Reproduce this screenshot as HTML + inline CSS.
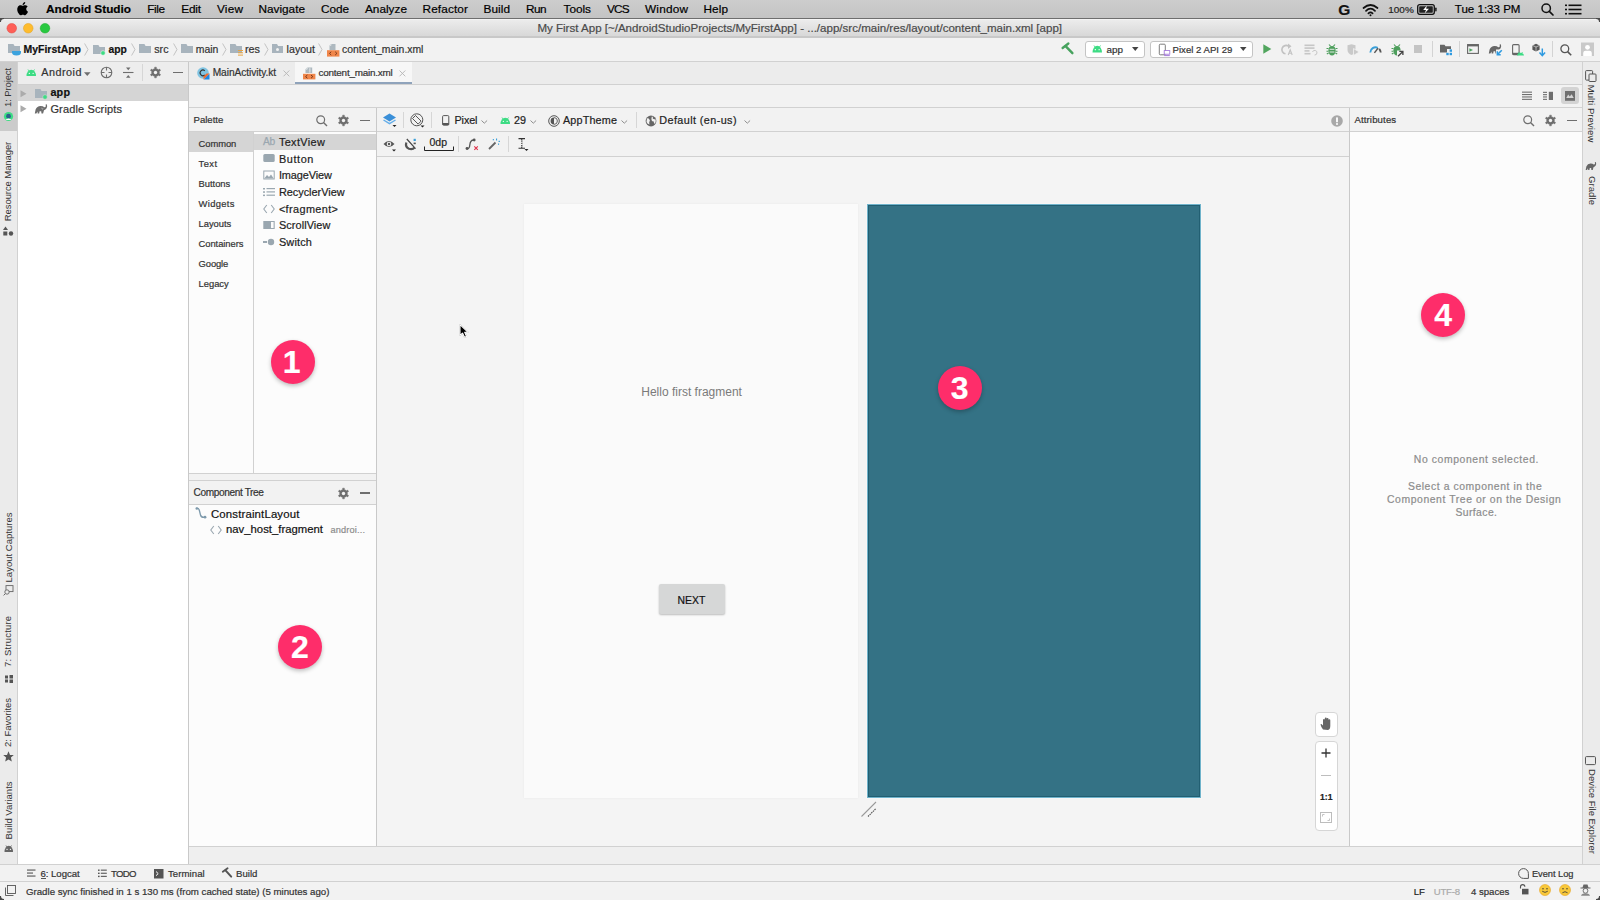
<!DOCTYPE html>
<html><head><meta charset="utf-8"><title>Android Studio</title>
<style>
html,body{margin:0;padding:0;}
body{width:1600px;height:900px;overflow:hidden;position:relative;background:#F2F2F2;font-family:"Liberation Sans",sans-serif;}
.a{position:absolute;}
.t{position:absolute;white-space:nowrap;line-height:1;-webkit-text-stroke:0.2px currentColor;}
svg{overflow:visible;}
</style></head><body>
<div class="a" style="left:0px;top:0px;width:1600px;height:18px;background:linear-gradient(#CDCDCD,#C4C4C4);"></div>
<div class="a" style="left:0px;top:18px;width:1600px;height:1px;background:#6E6E6E;"></div>
<div class="a" style="left:0px;top:19px;width:1600px;height:17px;background:linear-gradient(#EDEDED,#D8D8D8);"></div>
<div class="a" style="left:0px;top:19px;width:1600px;height:1px;background:#F4F4F4;"></div>
<div class="a" style="left:0px;top:36px;width:1600px;height:2px;background:#C8C8C8;"></div>
<div class="a" style="left:0px;top:38px;width:1600px;height:23px;background:#F2F2F2;"></div>
<div class="a" style="left:0px;top:61px;width:1600px;height:1px;background:#D1D1D1;"></div>
<div class="a" style="left:0px;top:62px;width:17px;height:802px;background:#EBEBEB;"></div>
<div class="a" style="left:17px;top:62px;width:1px;height:802px;background:#D1D1D1;"></div>
<div class="a" style="left:0px;top:62px;width:17px;height:69px;background:#CBCBCB;"></div>
<div class="a" style="left:18px;top:62px;width:170px;height:22px;background:#EDEDED;"></div>
<div class="a" style="left:18px;top:84px;width:170px;height:1px;background:#D1D1D1;"></div>
<div class="a" style="left:18px;top:85px;width:170px;height:779px;background:#FFFFFF;"></div>
<div class="a" style="left:18px;top:85px;width:170px;height:16px;background:#D5D5D5;"></div>
<div class="a" style="left:188px;top:62px;width:1px;height:802px;background:#C9C9C9;"></div>
<div class="a" style="left:189px;top:62px;width:1393px;height:22px;background:#ECECEC;"></div>
<div class="a" style="left:295px;top:62px;width:117px;height:22px;background:#F7F7F7;"></div>
<div class="a" style="left:295px;top:82px;width:117px;height:2px;background:#8FA3BB;"></div>
<div class="a" style="left:189px;top:84px;width:1393px;height:1px;background:#D1D1D1;"></div>
<div class="a" style="left:189px;top:85px;width:1393px;height:22px;background:#F2F2F2;"></div>
<div class="a" style="left:189px;top:107px;width:1393px;height:1px;background:#D1D1D1;"></div>
<div class="a" style="left:189px;top:108px;width:187px;height:23px;background:#F2F2F2;"></div>
<div class="a" style="left:189px;top:131px;width:187px;height:1px;background:#D1D1D1;"></div>
<div class="a" style="left:189px;top:132px;width:187px;height:341px;background:#FCFCFC;"></div>
<div class="a" style="left:189px;top:132px;width:64px;height:20px;background:#D5D5D5;"></div>
<div class="a" style="left:254px;top:134px;width:122px;height:16px;background:#D5D5D5;"></div>
<div class="a" style="left:253px;top:132px;width:1px;height:341px;background:#D1D1D1;"></div>
<div class="a" style="left:189px;top:473px;width:187px;height:1px;background:#D1D1D1;"></div>
<div class="a" style="left:189px;top:474px;width:187px;height:6px;background:#F2F2F2;"></div>
<div class="a" style="left:189px;top:480px;width:187px;height:1px;background:#D1D1D1;"></div>
<div class="a" style="left:189px;top:481px;width:187px;height:23px;background:#F2F2F2;"></div>
<div class="a" style="left:189px;top:504px;width:187px;height:1px;background:#D1D1D1;"></div>
<div class="a" style="left:189px;top:505px;width:187px;height:341px;background:#FCFCFC;"></div>
<div class="a" style="left:376px;top:108px;width:1px;height:738px;background:#C9C9C9;"></div>
<div class="a" style="left:377px;top:108px;width:972px;height:23px;background:#F2F2F2;"></div>
<div class="a" style="left:377px;top:131px;width:972px;height:1px;background:#D1D1D1;"></div>
<div class="a" style="left:377px;top:132px;width:972px;height:24px;background:#F2F2F2;"></div>
<div class="a" style="left:377px;top:156px;width:972px;height:1px;background:#D1D1D1;"></div>
<div class="a" style="left:377px;top:157px;width:972px;height:689px;background:#F4F4F4;"></div>
<div class="a" style="left:1349px;top:108px;width:1px;height:738px;background:#C9C9C9;"></div>
<div class="a" style="left:1350px;top:108px;width:232px;height:23px;background:#F2F2F2;"></div>
<div class="a" style="left:1350px;top:131px;width:232px;height:1px;background:#D1D1D1;"></div>
<div class="a" style="left:1350px;top:132px;width:232px;height:714px;background:#FCFCFC;"></div>
<div class="a" style="left:189px;top:846px;width:1393px;height:1px;background:#D1D1D1;"></div>
<div class="a" style="left:189px;top:847px;width:1393px;height:17px;background:#EFEFEF;"></div>
<div class="a" style="left:1582px;top:62px;width:1px;height:802px;background:#D1D1D1;"></div>
<div class="a" style="left:1583px;top:62px;width:17px;height:802px;background:#EBEBEB;"></div>
<div class="a" style="left:0px;top:864px;width:1600px;height:1px;background:#D1D1D1;"></div>
<div class="a" style="left:0px;top:865px;width:1600px;height:17px;background:#F2F2F2;"></div>
<div class="a" style="left:0px;top:881px;width:1600px;height:1px;background:#D1D1D1;"></div>
<div class="a" style="left:0px;top:882px;width:1600px;height:18px;background:#F2F2F2;"></div>
<div class="a" style="left:524px;top:204px;width:334px;height:594px;background:#FAFAFA;box-shadow:0 0 2px rgba(0,0,0,0.06);"></div>
<div class="a" style="left:866px;top:203px;width:336px;height:596px;background:#F8F6F5;"></div>
<div class="a" style="left:867px;top:204px;width:334px;height:594px;background:#347285;border:1px solid #6FB3CB;box-sizing:border-box;box-shadow:inset 0 0 0 1px #225F72;"></div>
<svg class="a" style="left:858px;top:798px;" width="22" height="22" viewBox="0 0 22 22"><path d="M3.5 18.5 L18 4" stroke="#9A9A9A" stroke-width="1.1"/><path d="M10 18.5 L18 10.5" stroke="#555" stroke-width="1.1" stroke-dasharray="1.5 0.8"/></svg>
<div class="t" style="left:641.25px;top:386px;font-size:12.0px;color:#7A7A7A;-webkit-text-stroke:0;">Hello first fragment</div>
<div class="a" style="left:659px;top:584px;width:66px;height:30px;background:#D6D7D7;border-radius:2px;box-shadow:0 1px 2px rgba(0,0,0,0.25);"></div>
<div class="t" style="left:677.60px;top:596px;font-size:10.4px;color:#111;">NEXT</div>
<div class="a" style="left:271px;top:340px;width:44px;height:44px;border-radius:50%;background:#FE2D6A;box-shadow:0 2px 4px rgba(0,0,0,0.25);"></div>
<div class="t" style="left:282.70px;top:346px;font-size:32.0px;color:#fff;font-weight:bold;">1</div>
<div class="a" style="left:277.5px;top:625px;width:44px;height:44px;border-radius:50%;background:#FE2D6A;box-shadow:0 2px 4px rgba(0,0,0,0.25);"></div>
<div class="t" style="left:290.90px;top:631px;font-size:32.0px;color:#fff;font-weight:bold;">2</div>
<div class="a" style="left:938px;top:365.6px;width:44px;height:44px;border-radius:50%;background:#FE2D6A;box-shadow:0 2px 4px rgba(0,0,0,0.25);"></div>
<div class="t" style="left:950.80px;top:372px;font-size:32.0px;color:#fff;font-weight:bold;">3</div>
<div class="a" style="left:1421px;top:293px;width:44px;height:44px;border-radius:50%;background:#FE2D6A;box-shadow:0 2px 4px rgba(0,0,0,0.25);"></div>
<div class="t" style="left:1434.20px;top:299px;font-size:32.0px;color:#fff;font-weight:bold;">4</div>
<svg class="a" style="left:16.3px;top:1.8px;" width="13" height="13.5" viewBox="0 0 13 13.5"><path transform="scale(0.55)" fill="#000" d="M12.152 6.896c-.948 0-2.415-1.078-3.96-1.04-2.040.027-3.910 1.183-4.961 3.014-2.117 3.675-.546 9.103 1.519 12.09 1.013 1.454 2.208 3.09 3.792 3.039 1.52-.065 2.09-.987 3.935-.987 1.831 0 2.35.987 3.96.948 1.637-.026 2.676-1.48 3.676-2.948 1.156-1.688 1.636-3.325 1.662-3.415-.039-.013-3.182-1.221-3.22-4.857-.026-3.04 2.48-4.494 2.597-4.559-1.429-2.090-3.623-2.324-4.390-2.376-2-.156-3.675 1.090-4.610 1.090zM15.53 3.83c.843-1.012 1.4-2.427 1.245-3.83-1.207.052-2.662.805-3.532 1.818-.78.896-1.454 2.338-1.273 3.714 1.338.104 2.715-.688 3.559-1.701"/></svg>
<div class="t" style="left:46.00px;top:4px;font-size:11.8px;color:#000;font-weight:bold;letter-spacing:-0.016px;">Android Studio</div>
<div class="t" style="left:147.20px;top:4px;font-size:11.8px;color:#000;letter-spacing:-0.405px;">File</div>
<div class="t" style="left:181.30px;top:4px;font-size:11.8px;color:#000;letter-spacing:-0.211px;">Edit</div>
<div class="t" style="left:217.00px;top:4px;font-size:11.8px;color:#000;letter-spacing:0.212px;">View</div>
<div class="t" style="left:258.40px;top:4px;font-size:11.8px;color:#000;letter-spacing:0.004px;">Navigate</div>
<div class="t" style="left:321.00px;top:4px;font-size:11.8px;color:#000;letter-spacing:-0.070px;">Code</div>
<div class="t" style="left:365.00px;top:4px;font-size:11.8px;color:#000;letter-spacing:0.003px;">Analyze</div>
<div class="t" style="left:422.50px;top:4px;font-size:11.8px;color:#000;letter-spacing:0.129px;">Refactor</div>
<div class="t" style="left:483.50px;top:4px;font-size:11.8px;color:#000;letter-spacing:0.065px;">Build</div>
<div class="t" style="left:526.00px;top:4px;font-size:11.8px;color:#000;letter-spacing:-0.573px;">Run</div>
<div class="t" style="left:563.50px;top:4px;font-size:11.8px;color:#000;letter-spacing:-0.012px;">Tools</div>
<div class="t" style="left:607.00px;top:4px;font-size:11.8px;color:#000;letter-spacing:-0.881px;">VCS</div>
<div class="t" style="left:645.00px;top:4px;font-size:11.8px;color:#000;letter-spacing:0.206px;">Window</div>
<div class="t" style="left:703.50px;top:4px;font-size:11.8px;color:#000;letter-spacing:0.077px;">Help</div>
<div class="t" style="left:1338.20px;top:2px;font-size:15.5px;color:#111;font-weight:bold;">G</div>
<svg class="a" style="left:1362px;top:3px;" width="17" height="13" viewBox="0 0 17 13"><g fill="none" stroke="#111" stroke-width="1.7" stroke-linecap="round"><path d="M1.5 5 Q8.5 -1 15.5 5"/><path d="M4 7.8 Q8.5 3.6 13 7.8"/><path d="M6.4 10.4 Q8.5 8.5 10.6 10.4"/></g><circle cx="8.5" cy="12.3" r="1" fill="#111"/></svg>
<div class="t" style="left:1388.30px;top:5px;font-size:9.95px;color:#222;">100%</div>
<svg class="a" style="left:1417px;top:4px;" width="20" height="11" viewBox="0 0 20 11"><rect x="0.7" y="0.7" width="16.6" height="9.6" rx="2" fill="none" stroke="#111" stroke-width="1.3"/><rect x="2.2" y="2.2" width="13.6" height="6.6" rx="0.8" fill="#222"/><rect x="18.2" y="3.6" width="1.4" height="3.8" rx="0.6" fill="#111"/><path d="M9.8 1.6 L6.2 6 H9 L7.6 9.4 L12 4.8 H9.2 Z" fill="#fff"/></svg>
<div class="t" style="left:1454.80px;top:4px;font-size:11.55px;color:#000;">Tue 1:33 PM</div>
<svg class="a" style="left:1541px;top:3px;" width="13" height="13" viewBox="0 0 13 13"><circle cx="5.2" cy="5.2" r="4.2" fill="none" stroke="#111" stroke-width="1.5"/><path d="M8.3 8.3 L12 12" stroke="#111" stroke-width="1.7" stroke-linecap="round"/></svg>
<svg class="a" style="left:1565px;top:4px;" width="17" height="11" viewBox="0 0 17 11"><g fill="#111"><rect x="0" y="0.5" width="2" height="1.6"/><rect x="0" y="4.7" width="2" height="1.6"/><rect x="0" y="8.9" width="2" height="1.6"/><rect x="3.5" y="0.5" width="13" height="1.6"/><rect x="3.5" y="4.7" width="13" height="1.6"/><rect x="3.5" y="8.9" width="13" height="1.6"/></g></svg>
<svg class="a" style="left:6px;top:23px;" width="10" height="10" viewBox="0 0 10 10"><circle cx="5.75" cy="5.25" r="4.8" fill="#FE5F57" stroke="#E14640" stroke-width="0.5"/></svg>
<svg class="a" style="left:23px;top:23px;" width="10" height="10" viewBox="0 0 10 10"><circle cx="5.25" cy="5.25" r="4.8" fill="#FEBC2E" stroke="#DFA023" stroke-width="0.5"/></svg>
<svg class="a" style="left:40px;top:23px;" width="10" height="10" viewBox="0 0 10 10"><circle cx="5" cy="5.25" r="4.8" fill="#28C840" stroke="#1DAD2B" stroke-width="0.5"/></svg>
<div class="t" style="left:537.40px;top:23px;font-size:11.55px;color:#4A4A4A;">My First App [~/AndroidStudioProjects/MyFirstApp] - .../app/src/main/res/layout/content_main.xml [app]</div>
<svg class="a" style="left:8px;top:44px;" width="12" height="9" viewBox="0 0 12 9"><path fill="#A8B4BD" d="M0 0 H5.4 L6.6 2 H12 V9 H0 Z"/></svg>
<svg class="a" style="left:12px;top:51px;" width="9" height="5" viewBox="0 0 9 5"><path d="M0 0 H9 V1.5 Q9 4.5 4.5 4.5 Q0 4.5 0 1.5 Z" fill="#3CA3DE"/></svg>
<div class="t" style="left:23.60px;top:45px;font-size:10.45px;color:#111;font-weight:bold;">MyFirstApp</div>
<svg class="a" style="left:84px;top:43px;" width="5" height="13" viewBox="0 0 5 13"><path d="M0.6 0.5 L4 6.5 L0.6 12.5" fill="none" stroke="#BDBDBD" stroke-width="0.9"/></svg>
<svg class="a" style="left:93px;top:45px;" width="12" height="9" viewBox="0 0 12 9"><path fill="#A8B4BD" d="M0 0 H5.4 L6.6 2 H12 V9 H0 Z"/></svg>
<svg class="a" style="left:100px;top:50px;" width="6" height="6" viewBox="0 0 6 6"><circle cx="3" cy="3" r="2.3" fill="#3DDC84" stroke="#F2F2F2" stroke-width="0.6"/></svg>
<div class="t" style="left:108.60px;top:45px;font-size:10.3px;color:#111;font-weight:bold;">app</div>
<svg class="a" style="left:131px;top:43px;" width="5" height="13" viewBox="0 0 5 13"><path d="M0.6 0.5 L4 6.5 L0.6 12.5" fill="none" stroke="#BDBDBD" stroke-width="0.9"/></svg>
<svg class="a" style="left:139px;top:44px;" width="12" height="9" viewBox="0 0 12 9"><path fill="#A8B4BD" d="M0 0 H5.4 L6.6 2 H12 V9 H0 Z"/></svg>
<div class="t" style="left:154.30px;top:44px;font-size:10.65px;color:#333;">src</div>
<svg class="a" style="left:173px;top:43px;" width="5" height="13" viewBox="0 0 5 13"><path d="M0.6 0.5 L4 6.5 L0.6 12.5" fill="none" stroke="#BDBDBD" stroke-width="0.9"/></svg>
<svg class="a" style="left:181px;top:44px;" width="12" height="9" viewBox="0 0 12 9"><path fill="#A8B4BD" d="M0 0 H5.4 L6.6 2 H12 V9 H0 Z"/></svg>
<div class="t" style="left:195.70px;top:45px;font-size:10.45px;color:#333;">main</div>
<svg class="a" style="left:222px;top:43px;" width="5" height="13" viewBox="0 0 5 13"><path d="M0.6 0.5 L4 6.5 L0.6 12.5" fill="none" stroke="#BDBDBD" stroke-width="0.9"/></svg>
<svg class="a" style="left:230px;top:44px;" width="12" height="9" viewBox="0 0 12 9"><path fill="#A8B4BD" d="M0 0 H5.4 L6.6 2 H12 V9 H0 Z"/></svg>
<svg class="a" style="left:238px;top:50px;" width="5" height="7" viewBox="0 0 5 7"><g fill="#E8A33D"><rect x="0" y="0" width="5" height="1"/><rect x="0" y="2.3" width="5" height="1"/><rect x="0" y="4.6" width="5" height="1"/></g></svg>
<div class="t" style="left:245.00px;top:44px;font-size:10.8px;color:#333;">res</div>
<svg class="a" style="left:264px;top:43px;" width="5" height="13" viewBox="0 0 5 13"><path d="M0.6 0.5 L4 6.5 L0.6 12.5" fill="none" stroke="#BDBDBD" stroke-width="0.9"/></svg>
<svg class="a" style="left:272px;top:44px;" width="11" height="9" viewBox="0 0 11 9"><path fill="#A8B4BD" d="M0 0 H5.0 L6.1 2 H11 V9 H0 Z"/></svg>
<svg class="a" style="left:275px;top:47px;" width="5" height="5" viewBox="0 0 5 5"><circle cx="2.5" cy="2.5" r="1.5" fill="#F2F2F2"/></svg>
<div class="t" style="left:286.60px;top:44px;font-size:10.65px;color:#333;">layout</div>
<svg class="a" style="left:318px;top:43px;" width="5" height="13" viewBox="0 0 5 13"><path d="M0.6 0.5 L4 6.5 L0.6 12.5" fill="none" stroke="#BDBDBD" stroke-width="0.9"/></svg>
<svg class="a" style="left:326.6px;top:43.5px;" width="13" height="13" viewBox="0 0 13 13"><path d="M4 0 H8.5 V6 H2.5 V1.5 Z" fill="#AEB9C0"/><path d="M4 0 V1.5 H2.5" fill="none" stroke="#F2F2F2" stroke-width="0.6"/><rect x="0" y="6.2" width="12.4" height="6.4" fill="#F0864A"/><path d="M4.2 7.8 L2.5 9.4 L4.2 11 M8.2 7.8 L9.9 9.4 L8.2 11" fill="none" stroke="#6B2E14" stroke-width="0.9"/></svg>
<div class="t" style="left:342.00px;top:45px;font-size:10.4px;color:#333;">content_main.xml</div>
<svg class="a" style="left:1060px;top:42px;" width="15" height="14" viewBox="0 0 15 14"><path d="M2.6 6 L8.4 1.5" stroke="#47A25E" stroke-width="2.3" stroke-linecap="round"/><path d="M5.6 4.2 L12.4 11.2" stroke="#47A25E" stroke-width="2.4" stroke-linecap="round"/></svg>
<div class="a" style="left:1084.7px;top:41px;width:59.899999999999864px;height:17px;background:#FFFFFF;border:1px solid #C4C4C4;border-radius:3px;box-sizing:border-box;"></div>
<svg class="a" style="left:1091.5px;top:45px;" width="10.5" height="7.5" viewBox="0 0 10.5 7.5"><path d="M0.5 7.5 A4.75 6.7 0 0 1 10.0 7.5 Z" fill="#3DDC84"/><path d="M2 0.5 L3.3 2.3 M8.5 0.5 L7.2 2.3" stroke="#3DDC84" stroke-width="0.9"/><circle cx="3.36" cy="4.65" r="0.7" fill="#fff"/><circle cx="7.140000000000001" cy="4.65" r="0.7" fill="#fff"/></svg>
<div class="t" style="left:1106.60px;top:45px;font-size:9.85px;color:#333;">app</div>
<svg class="a" style="left:1132px;top:47px;" width="7" height="5" viewBox="0 0 7 5"><path d="M0 0 H6.5 L3.25 4 Z" fill="#444"/></svg>
<div class="a" style="left:1150.3px;top:41px;width:102.29999999999995px;height:17px;background:#FFFFFF;border:1px solid #C4C4C4;border-radius:3px;box-sizing:border-box;"></div>
<svg class="a" style="left:1158px;top:43px;" width="14" height="14" viewBox="0 0 14 14"><rect x="1.3" y="1.2" width="6" height="10.6" rx="1" fill="none" stroke="#6E6E6E" stroke-width="0.9"/><rect x="6.2" y="7.6" width="5.6" height="3.6" fill="#fff" stroke="#9B6CD6" stroke-width="0.8"/><path d="M6.2 12.6 H11.8" stroke="#9B6CD6" stroke-width="0.9"/></svg>
<div class="t" style="left:1172.60px;top:45px;font-size:9.6px;color:#333;">Pixel 2 API 29</div>
<svg class="a" style="left:1240px;top:47px;" width="7" height="5" viewBox="0 0 7 5"><path d="M0 0 H6.5 L3.25 4 Z" fill="#444"/></svg>
<svg class="a" style="left:1263px;top:44px;" width="9" height="10" viewBox="0 0 9 10"><path d="M0.3 0.2 L8.3 4.9 L0.3 9.7 Z" fill="#51A55E"/></svg>
<svg class="a" style="left:1282px;top:43px;" width="12" height="13" viewBox="0 0 12 13"><path d="M6.5 3.2 A4.2 4.2 0 1 0 3.5 10.8" fill="none" stroke="#C2C2C2" stroke-width="1.6"/><path d="M6 0.5 L9.5 3.3 L6 6 Z" fill="#C2C2C2"/><path d="M6.2 12 L8.2 6.8 L10.2 12 M7 10.3 H9.4" fill="none" stroke="#C2C2C2" stroke-width="1.1"/></svg>
<svg class="a" style="left:1304px;top:44px;" width="14" height="12" viewBox="0 0 14 12"><g fill="#C6C6C6"><rect x="0.5" y="0.5" width="10" height="1.6"/><rect x="0.5" y="3.3" width="10" height="1.6"/><rect x="0.5" y="6.1" width="5" height="1.6"/><rect x="0.5" y="8.9" width="6" height="1.6"/></g><path d="M8.5 8 A2.3 2.3 0 1 1 10.6 11" fill="none" stroke="#C6C6C6" stroke-width="1"/></svg>
<svg class="a" style="left:1325.5px;top:43.5px;" width="12" height="12" viewBox="0 0 12 12"><g stroke="#4D9E5C" stroke-width="1.1" fill="none"><path d="M3 0.5 L4.5 2.2 M9 0.5 L7.5 2.2 M0.5 4.5 H2.5 M9.5 4.5 H11.5 M0.5 7.2 H2.5 M9.5 7.2 H11.5 M0.8 10 L2.6 9 M11.2 10 L9.4 9"/></g><path d="M6 2 C8.6 2 9.6 4 9.6 6.6 C9.6 9.6 8 11.6 6 11.6 C4 11.6 2.4 9.6 2.4 6.6 C2.4 4 3.4 2 6 2 Z" fill="#4D9E5C"/><path d="M3.6 5.3 H8.4 M3.6 8 H8.4" stroke="#F2F2F2" stroke-width="0.9"/></svg>
<svg class="a" style="left:1347px;top:44px;" width="13" height="12" viewBox="0 0 13 12"><path d="M0.5 1.3 L4.5 0.2 L8.5 1.3 V6 C8.5 8.5 6.8 10 4.5 11 C2.2 10 0.5 8.5 0.5 6 Z" fill="#C9C9C9"/><path d="M6.5 4.5 L12.3 8 L6.5 11.5 Z" fill="#C9C9C9" stroke="#F2F2F2" stroke-width="0.8"/></svg>
<svg class="a" style="left:1369px;top:44px;" width="13" height="10" viewBox="0 0 13 10"><path d="M1.3 8.5 A5.2 5.2 0 0 1 8.7 3.8" fill="none" stroke="#3A9FD8" stroke-width="1.9"/><path d="M10.2 4.8 A5.2 5.2 0 0 1 11.7 8.5" fill="none" stroke="#555" stroke-width="1.9"/><path d="M5.4 8.9 L9.1 4.1" stroke="#555" stroke-width="1.5"/></svg>
<svg class="a" style="left:1391px;top:43.5px;" width="13" height="13" viewBox="0 0 13 13"><g stroke="#4D9E5C" stroke-width="1.1" fill="none"><path d="M3 0.5 L4.5 2.2 M9 0.5 L7.5 2.2 M0.5 4.5 H2.5 M0.5 7.2 H2.5 M0.8 10 L2.6 9"/></g><path d="M6 2 C8.6 2 9.6 4 9.6 6.6 C9.6 9.6 8 11.6 6 11.6 C4 11.6 2.4 9.6 2.4 6.6 C2.4 4 3.4 2 6 2 Z" fill="#4D9E5C"/><rect x="6" y="6.5" width="7" height="6.5" fill="#F2F2F2"/><path d="M7 12.3 L11.6 7.7 M8.3 7.4 H11.9 V11" fill="none" stroke="#444" stroke-width="1.3"/></svg>
<div class="a" style="left:1414px;top:45px;width:8px;height:8px;background:#C4C4C4;"></div>
<div class="a" style="left:1432px;top:41px;width:1px;height:16px;background:#D3D3D3;"></div>
<svg class="a" style="left:1440px;top:44px;" width="13" height="12" viewBox="0 0 13 12"><path d="M0 0.8 H4.5 L5.5 2.2 H11 V8.4 H0 Z" fill="#666"/><rect x="7" y="5" width="6" height="7" fill="#F2F2F2"/><g fill="#2E9AE0"><rect x="9.6" y="5.4" width="2.4" height="2.4"/><rect x="6.3" y="8.8" width="2.4" height="2.4"/><rect x="9.6" y="8.8" width="2.4" height="2.4"/></g></svg>
<div class="a" style="left:1459px;top:41px;width:1px;height:16px;background:#D3D3D3;"></div>
<svg class="a" style="left:1467px;top:44px;" width="12" height="10" viewBox="0 0 12 10"><rect x="0.6" y="0.6" width="10.8" height="8.8" fill="none" stroke="#666" stroke-width="1.1"/><rect x="0.6" y="0.6" width="10.8" height="1.8" fill="#666"/><path d="M2.4 4.2 L6 6 L2.4 7.8 Z" fill="#4CA55F"/></svg>
<svg class="a" style="left:1488px;top:43px;" width="15" height="13" viewBox="0 0 15 13"><path d="M0.8 10.6 L1.6 6.5 Q3 3.2 6.5 3 Q9 2.9 10.2 4.2 Q11.5 4.5 11.9 3 L11.5 1.8 Q12.2 0.9 12.9 1.5 Q13.6 3.5 12.6 5.2 Q11.6 6.7 10 7.3 L9.1 10.6 H7.5 L7.2 8.3 H5.6 L5.2 10.6 H3.7 L3.5 8.4 L2.4 10.6 Z" fill="#666"/><rect x="8" y="6.5" width="7" height="6.5" fill="#F2F2F2"/><path d="M13.8 7.2 L9.6 11.4 M9.3 8.3 V11.7 H12.7" fill="none" stroke="#2E9AE0" stroke-width="1.5"/></svg>
<svg class="a" style="left:1512px;top:44px;" width="12" height="12" viewBox="0 0 12 12"><rect x="0.6" y="0.6" width="6.5" height="10" rx="1" fill="none" stroke="#666" stroke-width="1.1"/><rect x="0.6" y="8.8" width="6.5" height="1.8" fill="#666"/><path d="M5 11.6 A3.6 3.6 0 0 1 12 11.6 Z" fill="#3DDC84"/><path d="M6.4 8 L7.2 9 M10.6 8 L9.8 9" stroke="#3DDC84" stroke-width="0.8"/></svg>
<svg class="a" style="left:1532px;top:43px;" width="14" height="14" viewBox="0 0 14 14"><path d="M4 0.8 L7.6 2.4 V6.8 L4 8.6 L0.4 6.8 V2.4 Z" fill="#555"/><path d="M0.4 2.4 L4 4 L7.6 2.4 M4 4 V8.6" fill="none" stroke="#F2F2F2" stroke-width="0.6"/><path d="M10.3 5.5 V12" stroke="#2E9AE0" stroke-width="1.5"/><path d="M7.5 9.6 L10.3 12.6 L13.1 9.6" fill="none" stroke="#2E9AE0" stroke-width="1.5"/></svg>
<div class="a" style="left:1552px;top:41px;width:1px;height:16px;background:#D3D3D3;"></div>
<svg class="a" style="left:1560px;top:43.5px;" width="12" height="12" viewBox="0 0 12 12"><circle cx="4.8" cy="4.8" r="3.9" fill="none" stroke="#555" stroke-width="1.3"/><path d="M7.6 7.6 L11.2 11.2" stroke="#555" stroke-width="1.6"/></svg>
<svg class="a" style="left:1581px;top:42px;" width="13" height="14" viewBox="0 0 13 14"><rect x="0" y="0.5" width="13" height="13.5" fill="#C9C9C9"/><circle cx="6.5" cy="5.3" r="2.4" fill="#fff"/><path d="M2.2 14 V11 Q2.2 8.8 4.6 8.8 H8.4 Q10.8 8.8 10.8 11 V14 Z" fill="#fff"/></svg>
<svg class="a" style="left:25.7px;top:69px;" width="10.5" height="7" viewBox="0 0 10.5 7"><path d="M0.5 7 A4.75 6.2 0 0 1 10.0 7 Z" fill="#3DDC84"/><path d="M2 0.5 L3.3 2.3 M8.5 0.5 L7.2 2.3" stroke="#3DDC84" stroke-width="0.9"/><circle cx="3.36" cy="4.34" r="0.7" fill="#fff"/><circle cx="7.140000000000001" cy="4.34" r="0.7" fill="#fff"/></svg>
<div class="t" style="left:41.20px;top:67px;font-size:10.8px;color:#333;letter-spacing:0.512px;">Android</div>
<svg class="a" style="left:83.5px;top:71.5px;" width="7" height="5" viewBox="0 0 7 5"><path d="M0 0.2 H6.5 L3.25 4 Z" fill="#6E6E6E"/></svg>
<svg class="a" style="left:100px;top:66px;" width="13" height="13" viewBox="0 0 13 13"><circle cx="6.5" cy="6.5" r="5.3" fill="none" stroke="#6E6E6E" stroke-width="1.1"/><path d="M6.5 1 V4.5 M6.5 8.5 V12 M1 6.5 H4.5 M8.5 6.5 H12" stroke="#6E6E6E" stroke-width="1.1"/></svg>
<svg class="a" style="left:123px;top:67px;" width="11" height="12" viewBox="0 0 11 12"><path d="M0 5.5 H10.5" stroke="#6E6E6E" stroke-width="1.1"/><path d="M3 0.5 H7.5 L5.25 3.2 Z M3 10.8 H7.5 L5.25 8 Z" fill="#6E6E6E"/></svg>
<div class="a" style="left:142px;top:64px;width:1px;height:17px;background:#D6D6D6;"></div>
<svg class="a" style="left:150.2px;top:67px;" width="11" height="11" viewBox="0 0 11 11"><path d="M3.55 2.12 L4.62 1.70 L4.66 0.17 L6.34 0.17 L6.38 1.70 L7.45 2.12 L8.35 2.84 L9.70 2.10 L10.54 3.56 L9.23 4.36 L9.40 5.50 L9.23 6.64 L10.54 7.44 L9.70 8.90 L8.35 8.16 L7.45 8.88 L6.38 9.30 L6.34 10.83 L4.66 10.83 L4.62 9.30 L3.55 8.88 L2.65 8.16 L1.30 8.90 L0.46 7.44 L1.77 6.64 L1.60 5.50 L1.77 4.36 L0.46 3.56 L1.30 2.10 L2.65 2.84 Z" fill="#6E6E6E" stroke="#6E6E6E" stroke-width="0.5" stroke-linejoin="round"/><circle cx="5.5" cy="5.5" r="1.7" fill="#F2F2F2"/></svg>
<div class="a" style="left:172.5px;top:72px;width:10px;height:1.3px;background:#6E6E6E;"></div>
<svg class="a" style="left:20px;top:89.5px;" width="7" height="8" viewBox="0 0 7 8"><path d="M0.5 0.3 L6.5 3.8 L0.5 7.3 Z" fill="#ABABAB"/></svg>
<svg class="a" style="left:35px;top:89px;" width="12" height="9" viewBox="0 0 12 9"><path fill="#A8B4BD" d="M0 0 H5.4 L6.6 2 H12 V9 H0 Z"/></svg>
<svg class="a" style="left:42px;top:94px;" width="6" height="6" viewBox="0 0 6 6"><circle cx="3" cy="3" r="2.3" fill="#3DDC84" stroke="#D5D5D5" stroke-width="0.6"/></svg>
<div class="t" style="left:50.40px;top:87px;font-size:10.8px;color:#111;font-weight:bold;letter-spacing:0.200px;">app</div>
<svg class="a" style="left:20px;top:104.5px;" width="7" height="8" viewBox="0 0 7 8"><path d="M0.5 0.3 L6.5 3.8 L0.5 7.3 Z" fill="#ABABAB"/></svg>
<svg class="a" style="left:34px;top:103px;" width="14" height="12" viewBox="0 0 14 12"><path d="M0.8 10.6 L1.6 6.5 Q3 3.2 6.5 3 Q9 2.9 10.2 4.2 Q11.5 4.5 11.9 3 L11.5 1.8 Q12.2 0.9 12.9 1.5 Q13.6 3.5 12.6 5.2 Q11.6 6.7 10 7.3 L9.1 10.6 H7.5 L7.2 8.3 H5.6 L5.2 10.6 H3.7 L3.5 8.4 L2.4 10.6 Z" fill="#6E6E6E"/><path d="M7.5 5.2 Q8.3 6.6 9.3 5.4" fill="none" stroke="#fff" stroke-width="0.6"/></svg>
<div class="t" style="left:50.40px;top:104px;font-size:11.0px;color:#333;letter-spacing:0.147px;">Gradle Scripts</div>
<div class="a" style="left:-10.75px;top:82.49px;width:39.10px;height:10.92px;line-height:10.92px;font-size:9.5px;letter-spacing:-0.114px;color:#333;white-space:nowrap;transform:rotate(-90deg);transform-origin:50% 50%;">1: Project</div>
<svg class="a" style="left:3px;top:111px;" width="11" height="11" viewBox="0 0 11 11"><circle cx="5.5" cy="5.5" r="4.6" fill="#3DDC84"/><circle cx="5.5" cy="5.2" r="2.4" fill="#2D5F8A"/><path d="M2.2 9 Q5.5 6 8.8 9" fill="#fff"/></svg>
<div class="a" style="left:-30.90px;top:176.24px;width:79.40px;height:10.92px;line-height:10.92px;font-size:9.5px;letter-spacing:-0.093px;color:#333;white-space:nowrap;transform:rotate(-90deg);transform-origin:50% 50%;">Resource Manager</div>
<svg class="a" style="left:3px;top:226px;" width="11" height="10" viewBox="0 0 11 10"><path d="M2.5 0.5 L5 4 H0 Z" fill="#555"/><rect x="0.3" y="5.5" width="4" height="4" fill="#555"/><circle cx="8" cy="7.5" r="2.2" fill="#555"/></svg>
<div class="a" style="left:-26.20px;top:541.54px;width:70.00px;height:10.92px;line-height:10.92px;font-size:9.5px;letter-spacing:0.021px;color:#333;white-space:nowrap;transform:rotate(-90deg);transform-origin:50% 50%;">Layout Captures</div>
<svg class="a" style="left:3px;top:585px;" width="11" height="11" viewBox="0 0 11 11"><rect x="3" y="0.6" width="7" height="6" fill="none" stroke="#666" stroke-width="0.9"/><circle cx="4" cy="7" r="2.2" fill="#EBEBEB" stroke="#666" stroke-width="0.9"/><path d="M2.3 8.7 L0.6 10.4" stroke="#666" stroke-width="1"/></svg>
<div class="a" style="left:-16.80px;top:635.64px;width:51.20px;height:10.92px;line-height:10.92px;font-size:9.5px;letter-spacing:0.190px;color:#333;white-space:nowrap;transform:rotate(-90deg);transform-origin:50% 50%;">7: Structure</div>
<svg class="a" style="left:5px;top:675px;" width="10" height="10" viewBox="0 0 10 10"><g fill="#555"><rect x="0" y="0.5" width="3" height="3"/><rect x="0" y="4.5" width="3" height="3"/><rect x="4.5" y="0" width="3.5" height="3.5"/><rect x="4.5" y="4.5" width="3.5" height="3.5"/></g></svg>
<div class="a" style="left:-15.70px;top:717.04px;width:49.00px;height:10.92px;line-height:10.92px;font-size:9.5px;letter-spacing:-0.057px;color:#333;white-space:nowrap;transform:rotate(-90deg);transform-origin:50% 50%;">2: Favorites</div>
<svg class="a" style="left:3px;top:751px;" width="11" height="11" viewBox="0 0 11 11"><path d="M5.5 0.3 L7 3.9 L10.8 4.1 L7.9 6.6 L8.8 10.4 L5.5 8.4 L2.2 10.4 L3.1 6.6 L0.2 4.1 L4 3.9 Z" fill="#555"/></svg>
<div class="a" style="left:-20.20px;top:804.54px;width:58.00px;height:10.92px;line-height:10.92px;font-size:9.5px;letter-spacing:0.007px;color:#333;white-space:nowrap;transform:rotate(-90deg);transform-origin:50% 50%;">Build Variants</div>
<svg class="a" style="left:4px;top:845px;" width="9.5" height="7" viewBox="0 0 9.5 7"><path d="M0.5 7 A4.25 6.2 0 0 1 9.0 7 Z" fill="#666"/><path d="M2 0.5 L3.3 2.3 M7.5 0.5 L6.2 2.3" stroke="#666" stroke-width="0.9"/><circle cx="3.04" cy="4.34" r="0.7" fill="#fff"/><circle cx="6.460000000000001" cy="4.34" r="0.7" fill="#fff"/></svg>
<svg class="a" style="left:1585px;top:70px;" width="12" height="12" viewBox="0 0 12 12"><rect x="0.6" y="0.6" width="7" height="9.5" rx="0.8" fill="none" stroke="#555" stroke-width="1"/><rect x="4" y="4" width="7" height="7.5" rx="0.8" fill="#EBEBEB" stroke="#555" stroke-width="1"/></svg>
<div class="a" style="left:1562.20px;top:107.74px;width:57.60px;height:10.92px;line-height:10.92px;font-size:9.5px;letter-spacing:0.093px;color:#333;white-space:nowrap;transform:rotate(90deg);transform-origin:50% 50%;">Multi Preview</div>
<svg class="a" style="left:1585px;top:161px;" width="12" height="11" viewBox="0 0 12 11"><path transform="scale(0.85)" d="M0.8 10.6 L1.6 6.5 Q3 3.2 6.5 3 Q9 2.9 10.2 4.2 Q11.5 4.5 11.9 3 L11.5 1.8 Q12.2 0.9 12.9 1.5 Q13.6 3.5 12.6 5.2 Q11.6 6.7 10 7.3 L9.1 10.6 H7.5 L7.2 8.3 H5.6 L5.2 10.6 H3.7 L3.5 8.4 L2.4 10.6 Z" fill="#666"/></svg>
<div class="a" style="left:1576.50px;top:184.54px;width:29.00px;height:10.92px;line-height:10.92px;font-size:9.5px;letter-spacing:0.097px;color:#333;white-space:nowrap;transform:rotate(90deg);transform-origin:50% 50%;">Gradle</div>
<svg class="a" style="left:1585px;top:755px;" width="12" height="11" viewBox="0 0 12 11"><rect x="1.5" y="0.6" width="8" height="10" rx="1" fill="none" stroke="#555" stroke-width="1" transform="rotate(90 5.5 5.6)"/></svg>
<div class="a" style="left:1548.60px;top:805.94px;width:84.80px;height:10.92px;line-height:10.92px;font-size:9.5px;letter-spacing:-0.011px;color:#333;white-space:nowrap;transform:rotate(90deg);transform-origin:50% 50%;">Device File Explorer</div>
<svg class="a" style="left:196.5px;top:66.5px;" width="13" height="13" viewBox="0 0 13 13"><circle cx="6" cy="6" r="5.8" fill="#80C4E2"/><path d="M7.8 3.8 A2.8 2.8 0 1 0 7.8 8" fill="none" stroke="#333" stroke-width="1.1"/><path d="M6.5 12.5 L12.5 6.5 V12.5 Z" fill="#1E88E5"/><path d="M6.5 12.5 L12.5 6.5 H9.5 L6.5 9.5 Z" fill="#F26B2D"/></svg>
<div class="t" style="left:212.70px;top:68px;font-size:10.2px;color:#333;letter-spacing:-0.059px;">MainActivity.kt</div>
<svg class="a" style="left:282.5px;top:69.5px;" width="7" height="7" viewBox="0 0 7 7"><path d="M0.5 0.5 L6.3 6.3 M6.3 0.5 L0.5 6.3" stroke="#B5B5B5" stroke-width="0.9"/></svg>
<svg class="a" style="left:302.5px;top:66.5px;" width="13" height="13" viewBox="0 0 13 13"><path d="M4.2 0.5 H9.2 V6 H2.5 V2.2 Z" fill="#AEB9C0"/><path d="M4.2 0.5 V2.2 H2.5" fill="none" stroke="#F7F7F7" stroke-width="0.7"/><rect x="6.5" y="1.2" width="0.8" height="4.5" fill="#F7F7F7"/><rect x="0" y="6.8" width="12.4" height="5.6" fill="#F0864A"/><path d="M4.4 8 L2.6 9.6 L4.4 11.2 M8 8 L9.8 9.6 L8 11.2" fill="none" stroke="#6B2E14" stroke-width="0.9"/></svg>
<div class="t" style="left:318.60px;top:68px;font-size:9.9px;color:#333;letter-spacing:-0.226px;">content_main.xml</div>
<svg class="a" style="left:399px;top:69.5px;" width="7" height="7" viewBox="0 0 7 7"><path d="M0.5 0.5 L6.3 6.3 M6.3 0.5 L0.5 6.3" stroke="#B5B5B5" stroke-width="0.9"/></svg>
<svg class="a" style="left:1522px;top:91px;" width="10" height="10" viewBox="0 0 10 10"><g fill="#6E6E6E"><rect x="0" y="0.6" width="10" height="1.1"/><rect x="0" y="3" width="10" height="1.1"/><rect x="0" y="5.4" width="10" height="1.1"/><rect x="0" y="7.8" width="10" height="1.1"/></g></svg>
<svg class="a" style="left:1543px;top:91px;" width="11" height="10" viewBox="0 0 11 10"><g fill="#6E6E6E"><rect x="0" y="0.8" width="4" height="1.1"/><rect x="0" y="3.1" width="4" height="1.1"/><rect x="0" y="5.4" width="4" height="1.1"/><rect x="0" y="7.8" width="4" height="1.1"/><rect x="5.8" y="0.8" width="4.2" height="8.2"/></g></svg>
<div class="a" style="left:1561px;top:87px;width:18px;height:17px;background:#D3D3D3;border-radius:3px;"></div>
<svg class="a" style="left:1565px;top:91px;" width="10" height="10" viewBox="0 0 10 10"><rect x="0" y="0" width="10" height="9.8" fill="#6E6E6E"/><path d="M1.2 7 L3.2 3.6 L4.8 5.6 L6.6 3.2 L8.8 7 Z" fill="#D3D3D3"/></svg>
<div class="t" style="left:193.50px;top:115px;font-size:9.6px;color:#333;letter-spacing:-0.015px;">Palette</div>
<svg class="a" style="left:315.5px;top:114.5px;" width="12" height="12" viewBox="0 0 12 12"><circle cx="4.7" cy="4.7" r="3.9" fill="none" stroke="#6E6E6E" stroke-width="1.2"/><path d="M7.5 7.5 L11 11" stroke="#6E6E6E" stroke-width="1.4"/></svg>
<svg class="a" style="left:337.5px;top:114.5px;" width="11" height="11" viewBox="0 0 11 11"><path d="M3.55 2.12 L4.62 1.70 L4.66 0.17 L6.34 0.17 L6.38 1.70 L7.45 2.12 L8.35 2.84 L9.70 2.10 L10.54 3.56 L9.23 4.36 L9.40 5.50 L9.23 6.64 L10.54 7.44 L9.70 8.90 L8.35 8.16 L7.45 8.88 L6.38 9.30 L6.34 10.83 L4.66 10.83 L4.62 9.30 L3.55 8.88 L2.65 8.16 L1.30 8.90 L0.46 7.44 L1.77 6.64 L1.60 5.50 L1.77 4.36 L0.46 3.56 L1.30 2.10 L2.65 2.84 Z" fill="#6E6E6E" stroke="#6E6E6E" stroke-width="0.5" stroke-linejoin="round"/><circle cx="5.5" cy="5.5" r="1.7" fill="#F2F2F2"/></svg>
<div class="a" style="left:360px;top:119.5px;width:10px;height:1.3px;background:#6E6E6E;"></div>
<div class="t" style="left:198.60px;top:139px;font-size:9.4px;color:#333;letter-spacing:-0.067px;">Common</div>
<div class="t" style="left:198.60px;top:159px;font-size:9.4px;color:#333;letter-spacing:0.420px;">Text</div>
<div class="t" style="left:198.60px;top:179px;font-size:9.4px;color:#333;letter-spacing:-0.029px;">Buttons</div>
<div class="t" style="left:198.60px;top:199px;font-size:9.4px;color:#333;letter-spacing:0.324px;">Widgets</div>
<div class="t" style="left:198.60px;top:219px;font-size:9.4px;color:#333;letter-spacing:-0.037px;">Layouts</div>
<div class="t" style="left:198.60px;top:239px;font-size:9.4px;color:#333;letter-spacing:-0.062px;">Containers</div>
<div class="t" style="left:198.60px;top:259px;font-size:9.4px;color:#333;letter-spacing:-0.102px;">Google</div>
<div class="t" style="left:198.60px;top:279px;font-size:9.4px;color:#333;letter-spacing:-0.022px;">Legacy</div>
<div class="t" style="left:278.90px;top:137px;font-size:10.9px;color:#222;letter-spacing:0.354px;">TextView</div>
<div class="t" style="left:278.90px;top:154px;font-size:10.9px;color:#222;letter-spacing:0.597px;">Button</div>
<div class="t" style="left:278.90px;top:170px;font-size:10.9px;color:#222;letter-spacing:-0.090px;">ImageView</div>
<div class="t" style="left:278.90px;top:187px;font-size:10.9px;color:#222;letter-spacing:-0.011px;">RecyclerView</div>
<div class="t" style="left:278.90px;top:204px;font-size:10.9px;color:#222;letter-spacing:0.373px;">&lt;fragment&gt;</div>
<div class="t" style="left:278.90px;top:220px;font-size:10.9px;color:#222;letter-spacing:0.091px;">ScrollView</div>
<div class="t" style="left:278.90px;top:237px;font-size:10.9px;color:#222;letter-spacing:0.179px;">Switch</div>
<svg class="a" style="left:262.5px;top:136px;" width="14" height="10" viewBox="0 0 14 10"><text x="0" y="9" font-family="Liberation Sans" font-size="10.2" fill="#9AA7B0" stroke="#9AA7B0" stroke-width="0.25" letter-spacing="-0.2">Ab</text></svg>
<svg class="a" style="left:263px;top:153px;" width="12" height="10" viewBox="0 0 12 10"><rect x="0.3" y="1" width="11.4" height="8" rx="1.5" fill="#9AA7B0"/></svg>
<svg class="a" style="left:263px;top:170px;" width="12" height="10" viewBox="0 0 12 10"><rect x="0.3" y="0.5" width="11.4" height="9" fill="#9AA7B0"/><rect x="1.3" y="1.5" width="9.4" height="7" fill="#FCFCFC"/><path d="M1.3 8.5 L4 5 L6 7 L8 4.6 L10.7 8.5 Z" fill="#9AA7B0"/></svg>
<svg class="a" style="left:263px;top:186.5px;" width="12" height="10" viewBox="0 0 12 10"><g fill="#9AA7B0"><rect x="0" y="1" width="2" height="1.5"/><rect x="0" y="4.3" width="2" height="1.5"/><rect x="0" y="7.6" width="2" height="1.5"/><rect x="3.5" y="1" width="8.5" height="1.2"/><rect x="3.5" y="4.3" width="8.5" height="1.2"/><rect x="3.5" y="7.6" width="8.5" height="1.2"/></g></svg>
<svg class="a" style="left:263px;top:203.5px;" width="12" height="10" viewBox="0 0 12 10"><path d="M3.8 1 L0.8 5 L3.8 9 M8.2 1 L11.2 5 L8.2 9" fill="none" stroke="#9AA7B0" stroke-width="1.1"/></svg>
<svg class="a" style="left:263px;top:220px;" width="12" height="10" viewBox="0 0 12 10"><rect x="0.3" y="1" width="11.4" height="8" fill="#9AA7B0"/><rect x="8" y="2" width="2.6" height="6" fill="#FCFCFC"/></svg>
<svg class="a" style="left:263px;top:237px;" width="12" height="10" viewBox="0 0 12 10"><rect x="0" y="4" width="4" height="2" fill="#9AA7B0"/><circle cx="8" cy="5" r="3.2" fill="#9AA7B0"/></svg>
<div class="t" style="left:193.50px;top:488px;font-size:10.1px;color:#333;letter-spacing:-0.364px;">Component Tree</div>
<svg class="a" style="left:337.5px;top:487.5px;" width="11" height="11" viewBox="0 0 11 11"><path d="M3.55 2.12 L4.62 1.70 L4.66 0.17 L6.34 0.17 L6.38 1.70 L7.45 2.12 L8.35 2.84 L9.70 2.10 L10.54 3.56 L9.23 4.36 L9.40 5.50 L9.23 6.64 L10.54 7.44 L9.70 8.90 L8.35 8.16 L7.45 8.88 L6.38 9.30 L6.34 10.83 L4.66 10.83 L4.62 9.30 L3.55 8.88 L2.65 8.16 L1.30 8.90 L0.46 7.44 L1.77 6.64 L1.60 5.50 L1.77 4.36 L0.46 3.56 L1.30 2.10 L2.65 2.84 Z" fill="#6E6E6E" stroke="#6E6E6E" stroke-width="0.5" stroke-linejoin="round"/><circle cx="5.5" cy="5.5" r="1.7" fill="#F2F2F2"/></svg>
<div class="a" style="left:360px;top:492.3px;width:10px;height:1.3px;background:#6E6E6E;"></div>
<svg class="a" style="left:194.5px;top:507px;" width="13" height="12" viewBox="0 0 13 12"><path d="M1.5 1.2 Q4 1 4.5 4 L5.5 8 Q6 10.5 9.5 10.3" fill="none" stroke="#7E9AAC" stroke-width="1.3"/><circle cx="1.8" cy="1.5" r="1.3" fill="#7E9AAC"/><circle cx="10" cy="10.2" r="1.4" fill="#7E9AAC"/></svg>
<div class="t" style="left:211.00px;top:509px;font-size:11.4px;color:#111;letter-spacing:0.148px;">ConstraintLayout</div>
<svg class="a" style="left:209.5px;top:524.5px;" width="12" height="10" viewBox="0 0 12 10"><path d="M3.8 1 L0.8 5 L3.8 9 M8.2 1 L11.2 5 L8.2 9" fill="none" stroke="#9AA7B0" stroke-width="1.1"/></svg>
<div class="t" style="left:226.00px;top:524px;font-size:11.3px;color:#111;letter-spacing:0.016px;">nav_host_fragment</div>
<div class="t" style="left:330.60px;top:526px;font-size:9.2px;color:#8C8C8C;letter-spacing:0.145px;">androi...</div>
<svg class="a" style="left:383px;top:113px;" width="14" height="14" viewBox="0 0 14 14"><path d="M6.5 0.5 L13 4.5 L6.5 8.5 L0 4.5 Z" fill="#3A8FD8"/><path d="M0.5 7 L6.5 10.7 L12.5 7" fill="none" stroke="#64AEEA" stroke-width="1.4"/><path d="M9.5 12 H13.5 L11.5 14 Z" fill="#222"/></svg>
<div class="a" style="left:402.5px;top:112px;width:1px;height:16px;background:#D6D6D6;"></div>
<svg class="a" style="left:410px;top:113px;" width="15" height="15" viewBox="0 0 15 15"><g fill="none" stroke="#444" stroke-width="0.9"><circle cx="6.8" cy="6.8" r="6"/><path d="M2.5 5.5 L5.5 2.5 L11.1 8.1 L8.1 11.1 Z"/></g><path d="M10.5 12.5 H14.5 L12.5 14.5 Z" fill="#222"/></svg>
<div class="a" style="left:430.5px;top:112px;width:1px;height:16px;background:#D6D6D6;"></div>
<svg class="a" style="left:442px;top:115px;" width="8" height="11" viewBox="0 0 8 11"><rect x="0.6" y="0.6" width="6.2" height="9.6" rx="1" fill="none" stroke="#555" stroke-width="1"/><rect x="0.6" y="8" width="6.2" height="2" fill="#555"/></svg>
<div class="t" style="left:454.50px;top:115px;font-size:10.8px;color:#222;letter-spacing:-0.102px;">Pixel</div>
<svg class="a" style="left:481px;top:120px;" width="7" height="4" viewBox="0 0 7 4"><path d="M0.5 0.5 L3.3 3.2 L6.1 0.5" fill="none" stroke="#8E8E8E" stroke-width="1"/></svg>
<svg class="a" style="left:499.5px;top:117px;" width="10.5" height="7" viewBox="0 0 10.5 7"><path d="M0.5 7 A4.75 6.2 0 0 1 10.0 7 Z" fill="#3DDC84"/><path d="M2 0.5 L3.3 2.3 M8.5 0.5 L7.2 2.3" stroke="#3DDC84" stroke-width="0.9"/><circle cx="3.36" cy="4.34" r="0.7" fill="#fff"/><circle cx="7.140000000000001" cy="4.34" r="0.7" fill="#fff"/></svg>
<div class="t" style="left:514.00px;top:115px;font-size:10.8px;color:#222;letter-spacing:-0.013px;">29</div>
<svg class="a" style="left:530px;top:120px;" width="7" height="4" viewBox="0 0 7 4"><path d="M0.5 0.5 L3.3 3.2 L6.1 0.5" fill="none" stroke="#8E8E8E" stroke-width="1"/></svg>
<svg class="a" style="left:548px;top:114.5px;" width="12" height="12" viewBox="0 0 12 12"><circle cx="6" cy="6" r="5.3" fill="none" stroke="#555" stroke-width="1"/><path d="M6 2.6 A3.4 3.4 0 0 0 6 9.4 Z" fill="#555"/><path d="M6 2.6 A3.4 3.4 0 0 1 6 9.4" fill="none" stroke="#555" stroke-width="0.9"/></svg>
<div class="t" style="left:563.00px;top:115px;font-size:10.8px;color:#222;letter-spacing:0.153px;">AppTheme</div>
<svg class="a" style="left:621px;top:120px;" width="7" height="4" viewBox="0 0 7 4"><path d="M0.5 0.5 L3.3 3.2 L6.1 0.5" fill="none" stroke="#8E8E8E" stroke-width="1"/></svg>
<div class="a" style="left:635.5px;top:112px;width:1px;height:16px;background:#D6D6D6;"></div>
<svg class="a" style="left:645px;top:114.5px;" width="12" height="12" viewBox="0 0 12 12"><circle cx="6" cy="6" r="5.4" fill="#666"/><path d="M2 3.5 Q3.5 2.8 4.2 4.2 Q5.5 5 4.5 6.5 Q3.8 7.5 4.5 9.6 Q2.5 9 1.5 7 Z M7 1.2 Q8.5 2.5 7.8 3.8 Q9.5 4.5 10.8 4.6 Q11 7 9.8 9 Q8.5 8 8.8 6.6 Q7 6.5 6.5 5 Q6.2 3 7 1.2Z" fill="#F2F2F2"/></svg>
<div class="t" style="left:659.30px;top:115px;font-size:10.8px;color:#222;letter-spacing:0.412px;">Default (en-us)</div>
<svg class="a" style="left:744px;top:120px;" width="7" height="4" viewBox="0 0 7 4"><path d="M0.5 0.5 L3.3 3.2 L6.1 0.5" fill="none" stroke="#8E8E8E" stroke-width="1"/></svg>
<svg class="a" style="left:1331px;top:114.5px;" width="12" height="12" viewBox="0 0 12 12"><circle cx="6" cy="6" r="5.8" fill="#A8A8A8"/><rect x="5.1" y="2.3" width="1.8" height="5" rx="0.6" fill="#fff"/><circle cx="6" cy="9.1" r="1" fill="#fff"/></svg>
<svg class="a" style="left:383px;top:139px;" width="14" height="13" viewBox="0 0 14 13"><path d="M0.5 5 Q6 -1 11.5 5 Q6 11 0.5 5 Z" fill="#555"/><circle cx="6" cy="5" r="2.3" fill="#F2F2F2"/><circle cx="6" cy="5" r="1.2" fill="#555"/><path d="M9 10.5 H13 L11 12.5 Z" fill="#222"/></svg>
<svg class="a" style="left:405px;top:138px;" width="12" height="12" viewBox="0 0 12 12"><path d="M1.8 1 L10.5 10.6" stroke="#444" stroke-width="1.2"/><path d="M1.3 4.5 Q0 9 4 10.8 Q7.6 12 9.6 9.5" fill="none" stroke="#555" stroke-width="2.2"/><rect x="8.6" y="0.8" width="2.2" height="2.2" fill="#3A9FD8"/><rect x="8.6" y="4.6" width="2.2" height="1.6" fill="#555"/></svg>
<div class="t" style="left:429.50px;top:137px;font-size:10.5px;color:#222;letter-spacing:-0.009px;">0dp</div>
<svg class="a" style="left:423.5px;top:145px;" width="31" height="7" viewBox="0 0 31 7"><path d="M0.5 1.5 V5.5 H29.5 V1.5" fill="none" stroke="#222" stroke-width="1"/></svg>
<div class="a" style="left:458px;top:136px;width:1px;height:16px;background:#D6D6D6;"></div>
<svg class="a" style="left:465px;top:138px;" width="14" height="13" viewBox="0 0 14 13"><path d="M1.8 10.8 Q4.5 11 4.8 7 Q5.2 2 8.8 2" fill="none" stroke="#555" stroke-width="1.3"/><circle cx="2" cy="10.5" r="1.4" fill="#555"/><circle cx="9.2" cy="2" r="1.4" fill="#555"/><path d="M9.3 8.3 L12.8 11.8 M12.8 8.3 L9.3 11.8" stroke="#E0334C" stroke-width="1.1"/></svg>
<svg class="a" style="left:487.5px;top:138px;" width="12" height="12" viewBox="0 0 12 12"><path d="M1 11 L7.5 4.5" stroke="#666" stroke-width="1.8"/><g fill="#3A9FD8"><rect x="8" y="0.5" width="1.1" height="2"/><rect x="10.5" y="2.8" width="1.5" height="1.1"/><rect x="10" y="5.5" width="1.1" height="1.3"/><rect x="4.8" y="1" width="1.1" height="1.3"/></g></svg>
<div class="a" style="left:507.5px;top:136px;width:1px;height:16px;background:#D6D6D6;"></div>
<svg class="a" style="left:517px;top:138px;" width="12" height="14" viewBox="0 0 12 14"><path d="M1.5 0.6 H8 M4.75 0.6 V10.2 M1.5 10.2 H8" fill="none" stroke="#333" stroke-width="1.1" stroke-dasharray="none"/><rect x="3.9" y="2.2" width="1.7" height="6.4" fill="#F2F2F2"/><g fill="#333"><rect x="4.2" y="2.6" width="1.1" height="1.1"/><rect x="4.2" y="4.8" width="1.1" height="1.1"/><rect x="4.2" y="7" width="1.1" height="1.1"/></g><path d="M7.5 11 H11.5 L9.5 13 Z" fill="#222"/></svg>
<div class="t" style="left:1354.40px;top:115px;font-size:9.6px;color:#333;letter-spacing:0.139px;">Attributes</div>
<svg class="a" style="left:1523px;top:114.5px;" width="12" height="12" viewBox="0 0 12 12"><circle cx="4.7" cy="4.7" r="3.9" fill="none" stroke="#6E6E6E" stroke-width="1.2"/><path d="M7.5 7.5 L11 11" stroke="#6E6E6E" stroke-width="1.4"/></svg>
<svg class="a" style="left:1545px;top:114.5px;" width="11" height="11" viewBox="0 0 11 11"><path d="M3.55 2.12 L4.62 1.70 L4.66 0.17 L6.34 0.17 L6.38 1.70 L7.45 2.12 L8.35 2.84 L9.70 2.10 L10.54 3.56 L9.23 4.36 L9.40 5.50 L9.23 6.64 L10.54 7.44 L9.70 8.90 L8.35 8.16 L7.45 8.88 L6.38 9.30 L6.34 10.83 L4.66 10.83 L4.62 9.30 L3.55 8.88 L2.65 8.16 L1.30 8.90 L0.46 7.44 L1.77 6.64 L1.60 5.50 L1.77 4.36 L0.46 3.56 L1.30 2.10 L2.65 2.84 Z" fill="#6E6E6E" stroke="#6E6E6E" stroke-width="0.5" stroke-linejoin="round"/><circle cx="5.5" cy="5.5" r="1.7" fill="#F2F2F2"/></svg>
<div class="a" style="left:1567px;top:119.5px;width:10px;height:1.3px;background:#6E6E6E;"></div>
<div class="t" style="left:1413.80px;top:455px;font-size:10.4px;color:#8C8C8C;letter-spacing:0.597px;">No component selected.</div>
<div class="t" style="left:1407.90px;top:482px;font-size:10.4px;color:#8C8C8C;letter-spacing:0.569px;">Select a component in the</div>
<div class="t" style="left:1387.00px;top:495px;font-size:10.4px;color:#8C8C8C;letter-spacing:0.578px;">Component Tree or on the Design</div>
<div class="t" style="left:1455.40px;top:508px;font-size:10.4px;color:#8C8C8C;letter-spacing:0.410px;">Surface.</div>
<div class="a" style="left:1314.5px;top:712px;width:23px;height:25px;background:#FFFFFF;border:1px solid #D6D6D6;border-radius:4px;box-sizing:border-box;"></div>
<svg class="a" style="left:1320px;top:717px;" width="12" height="14" viewBox="0 0 12 14"><path d="M3 12.5 Q1 10 0.6 7.8 Q0.4 6.8 1.4 7 L3 8.5 V3 Q3 2 4 2 Q4.8 2 4.8 3 V6 V1.6 Q4.8 0.6 5.8 0.6 Q6.7 0.6 6.7 1.6 V6 V2 Q6.7 1 7.6 1 Q8.5 1 8.5 2 V6.2 V3.2 Q8.5 2.3 9.4 2.3 Q10.3 2.3 10.3 3.2 V9 Q10.3 12.5 8 13 Z" fill="#666"/></svg>
<div class="a" style="left:1314.5px;top:741px;width:23px;height:89.5px;background:#FFFFFF;border:1px solid #D6D6D6;border-radius:4px;box-sizing:border-box;"></div>
<svg class="a" style="left:1321px;top:748px;" width="10" height="10" viewBox="0 0 10 10"><path d="M5 0.5 V9.5 M0.5 5 H9.5" stroke="#333" stroke-width="1.3"/></svg>
<div class="a" style="left:1321px;top:774.5px;width:10px;height:1.3px;background:#BDBDBD;"></div>
<div class="t" style="left:1320.00px;top:793px;font-size:8.6px;color:#222;font-weight:bold;">1:1</div>
<svg class="a" style="left:1320px;top:812px;" width="12" height="11" viewBox="0 0 12 11"><rect x="0.5" y="0.5" width="11" height="10" fill="none" stroke="#BDBDBD" stroke-width="1"/><path d="M2.5 4.5 V2.5 H4.5 M9.5 6.5 V8.5 H7.5" fill="none" stroke="#BDBDBD" stroke-width="0.9"/></svg>
<svg class="a" style="left:26.5px;top:869px;" width="9" height="9" viewBox="0 0 9 9"><g fill="#555"><rect x="0" y="0.5" width="8.5" height="1.1"/><rect x="0" y="3.5" width="6" height="1.1"/><rect x="0" y="6.5" width="8.5" height="1.1"/></g></svg>
<div class="t" style="left:40.40px;top:869px;font-size:9.6px;color:#333;letter-spacing:-0.012px;">6: Logcat</div>
<div class="a" style="left:40.6px;top:878.3px;width:5.5px;height:0.9px;background:#555;"></div>
<svg class="a" style="left:98px;top:869px;" width="9" height="9" viewBox="0 0 9 9"><g fill="#555"><rect x="0" y="0.5" width="1.6" height="1.4"/><rect x="0" y="3.6" width="1.6" height="1.4"/><rect x="0" y="6.7" width="1.6" height="1.4"/><rect x="2.8" y="0.6" width="6" height="1.1"/><rect x="2.8" y="3.7" width="6" height="1.1"/><rect x="2.8" y="6.8" width="6" height="1.1"/></g></svg>
<div class="t" style="left:111.00px;top:869px;font-size:9.6px;color:#333;letter-spacing:-0.653px;">TODO</div>
<svg class="a" style="left:154px;top:868.5px;" width="10" height="10" viewBox="0 0 10 10"><rect x="0" y="0" width="9.5" height="9.5" fill="#555"/><path d="M2 2.5 L4.2 4.6 L2 6.7" fill="none" stroke="#fff" stroke-width="1"/></svg>
<div class="t" style="left:168.00px;top:869px;font-size:9.6px;color:#333;letter-spacing:0.060px;">Terminal</div>
<svg class="a" style="left:221px;top:867px;" width="12" height="12" viewBox="0 0 12 12"><path d="M1.8 4.8 L6.6 1.2" stroke="#555" stroke-width="1.8" stroke-linecap="round"/><path d="M4.5 3.4 L10.2 9.6" stroke="#555" stroke-width="2" stroke-linecap="round"/></svg>
<div class="t" style="left:236.00px;top:869px;font-size:9.6px;color:#333;letter-spacing:0.013px;">Build</div>
<svg class="a" style="left:1517.5px;top:868px;" width="11" height="11" viewBox="0 0 11 11"><path d="M10.4 10.4 H5.5 A4.9 4.9 0 1 1 10.4 5.5 Z" fill="none" stroke="#555" stroke-width="1"/></svg>
<div class="t" style="left:1531.90px;top:870px;font-size:9.3px;color:#333;letter-spacing:-0.035px;">Event Log</div>
<svg class="a" style="left:4.5px;top:885px;" width="11" height="11" viewBox="0 0 11 11"><rect x="2.5" y="0.5" width="8" height="8" fill="none" stroke="#555" stroke-width="0.9"/><path d="M0.5 2.5 V10.5 H8.5" fill="none" stroke="#555" stroke-width="0.9"/></svg>
<div class="t" style="left:26.00px;top:887px;font-size:9.7px;color:#333;letter-spacing:-0.012px;">Gradle sync finished in 1 s 130 ms (from cached state) (5 minutes ago)</div>
<div class="t" style="left:1413.75px;top:887px;font-size:9.6px;color:#222;">LF</div>
<div class="t" style="left:1433.75px;top:887px;font-size:9.6px;color:#AAAAAA;letter-spacing:-0.237px;">UTF-8</div>
<div class="t" style="left:1471.00px;top:887px;font-size:9.6px;color:#333;letter-spacing:-0.003px;">4 spaces</div>
<svg class="a" style="left:1519px;top:884px;" width="10" height="11" viewBox="0 0 10 11"><path d="M1.5 4.5 V2.8 A2.2 2.2 0 0 1 5.9 2.8" fill="none" stroke="#555" stroke-width="1.1"/><rect x="3" y="4.8" width="6.5" height="5.6" fill="#555"/></svg>
<svg class="a" style="left:1539px;top:884px;" width="12" height="12" viewBox="0 0 12 12"><circle cx="6" cy="6" r="5.5" fill="#F8C93C" stroke="#E8A21E" stroke-width="0.6"/><circle cx="4" cy="4.7" r="0.7" fill="#333"/><circle cx="8" cy="4.7" r="0.7" fill="#333"/><path d="M3.2 7.2 Q6 9.6 8.8 7.2" fill="none" stroke="#333" stroke-width="0.8"/></svg>
<svg class="a" style="left:1559px;top:884px;" width="12" height="12" viewBox="0 0 12 12"><circle cx="6" cy="6" r="5.5" fill="#F8C93C" stroke="#E8A21E" stroke-width="0.6"/><circle cx="4" cy="4.7" r="0.7" fill="#333"/><circle cx="8" cy="4.7" r="0.7" fill="#333"/><path d="M3.4 8.8 Q6 6.6 8.6 8.8" fill="none" stroke="#333" stroke-width="0.8"/></svg>
<svg class="a" style="left:1580px;top:883.5px;" width="11" height="12" viewBox="0 0 11 12"><path d="M2.5 3.5 L3.5 0.5 H7.5 L8.5 3.5 Z M0.5 3.5 H10.5 V4.5 H0.5 Z" fill="#666"/><circle cx="5.5" cy="6.8" r="2.4" fill="none" stroke="#666" stroke-width="0.9"/><path d="M1 11.8 Q1.5 9.2 5.5 9.2 Q9.5 9.2 10 11.8 Z" fill="#888"/></svg>
<svg class="a" style="left:0px;top:18px;" width="4" height="4" viewBox="0 0 4 4"><path d="M0 0 H4 V1 A3 3 0 0 0 1 4 H0 Z" fill="#4A4A4A"/></svg>
<svg class="a" style="left:1596px;top:18px;" width="4" height="4" viewBox="0 0 4 4"><path d="M4 0 H0 V1 A3 3 0 0 1 3 4 H4 Z" fill="#4A4A4A"/></svg>
<svg class="a" style="left:0px;top:896px;" width="4" height="4" viewBox="0 0 4 4"><path d="M0 4 H4 V3 A3 3 0 0 1 1 0 H0 Z" fill="#4A4A4A"/></svg>
<svg class="a" style="left:1596px;top:896px;" width="4" height="4" viewBox="0 0 4 4"><path d="M4 4 H0 V3 A3 3 0 0 0 3 0 H4 Z" fill="#4A4A4A"/></svg>
<svg class="a" style="left:457px;top:322px;" width="13" height="17" viewBox="0 0 13 17"><path d="M3 2.6 V13.4 L5.5 11.1 L7.5 15.3 L9.6 14.4 L7.7 10.3 L10.9 10.1 Z" fill="#000" stroke="#fff" stroke-width="1.1" stroke-linejoin="round" style="filter:drop-shadow(0 0.6px 0.6px rgba(0,0,0,0.4))"/></svg>
</body></html>
